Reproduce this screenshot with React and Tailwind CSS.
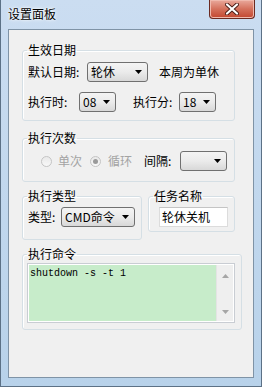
import React from "react";

const cjk = { fontFamily: '"Noto Sans CJK SC", "Noto Sans", sans-serif' };

const Arrow = ({ color = "#000" }) => (
  <svg width="7" height="4" viewBox="0 0 7 4" className="shrink-0">
    <path d="M0 0h7L3.5 4z" fill={color} />
  </svg>
);

const Select = ({ width, value }) => (
  <div
    className={`${width} h-[20px] flex items-center justify-between pl-[3px] pr-[5px] border border-[#707070] rounded-[3px] bg-gradient-to-b from-[#f4f4f4] via-[#ebebeb] to-[#d8d8d8] text-[12px] leading-[14px] text-black`}
  >
    <span className="whitespace-nowrap">{value}</span>
    <Arrow />
  </div>
);

const Radio = ({ checked }) => (
  <span className="w-[11px] h-[11px] rounded-full border border-[#c4c4c4] bg-gradient-to-b from-[#e9e9e9] to-[#f8f8f8] flex items-center justify-center shrink-0">
    {checked && <span className="w-[5px] h-[5px] rounded-full bg-[#9a9a9a]" />}
  </span>
);

const Group = ({ title, className = "", children }) => (
  <fieldset className={`border border-[#d5dfe5] rounded-[3px] shadow-[inset_1px_1px_0_#ffffff] ${className}`}>
    <legend className="ml-[4px] px-[1px] text-[12px] leading-[14px] text-black">{title}</legend>
    {children}
  </fieldset>
);

export default function App() {
  return (
    <div
      className="w-[262px] h-[387px] flex flex-col px-[7px] pb-[8px] bg-gradient-to-b from-[#cbddf1] to-[#b8d2ea] border-l border-r border-b border-[#5c7186] overflow-hidden"
      style={cjk}
    >
      <div className="h-[29px] flex items-start justify-between shrink-0">
        <span className="mt-[7px] text-[12px] leading-[14px] text-black [text-shadow:0_0_4px_#ffffff,0_0_2px_#ffffff]">
          设置面板
        </span>
        <div className="w-[46px] h-[19px] -mr-[1px] rounded-b-[4px] border border-t-0 border-[#6b2a21] bg-gradient-to-b from-[#e9a99c] via-[#d4705c] to-[#c2452e] flex items-center justify-center shadow-[inset_0_0_0_1px_#f0b9ad]">
          <svg width="14" height="12" viewBox="0 0 14 12">
            <path d="M2 1.5l10 9M12 1.5l-10 9" stroke="#4a1c16" strokeWidth="4" strokeLinecap="round" />
            <path d="M2 1.5l10 9M12 1.5l-10 9" stroke="#ffffff" strokeWidth="2.2" strokeLinecap="round" />
          </svg>
        </div>
      </div>

      <div className="flex-1 bg-[#f0f0f0] border border-[#7f93a6] flex flex-col pl-[13px]">
        <Group title="生效日期" className="mt-[13px] w-[213px]">
          <div className="pl-[5px] pt-[5px] pb-[8px] text-[12px] leading-[14px]">
            <div className="flex items-center">
              <span className="w-[59px] whitespace-nowrap">默认日期:</span>
              <Select width="w-[61px]" value="轮休" />
              <span className="ml-[11px] whitespace-nowrap">本周为单休</span>
            </div>
            <div className="flex items-center mt-[10px]">
              <span className="w-[51px] whitespace-nowrap">执行时:</span>
              <Select width="w-[37px]" value="08" />
              <span className="ml-[17px] w-[46px] whitespace-nowrap">执行分:</span>
              <Select width="w-[37px]" value="18" />
            </div>
          </div>
        </Group>

        <Group title="执行次数" className="mt-[10px] w-[213px]">
          <div className="pl-[18px] pt-[6px] pb-[10px] flex items-center text-[12px] leading-[14px]">
            <Radio />
            <span className="ml-[6px] text-[#a3a3a3]">单次</span>
            <span className="ml-[8px]">
              <Radio checked />
            </span>
            <span className="ml-[7px] text-[#a3a3a3]">循环</span>
            <span className="ml-[12px] w-[36px] whitespace-nowrap">间隔:</span>
            <Select width="w-[47px]" value="" />
          </div>
        </Group>

        <div className="flex items-start mt-[7px]">
          <Group title="执行类型" className="w-[120px]">
            <div className="pl-[5px] pt-[4px] pb-[12px] flex items-center text-[12px] leading-[14px]">
              <span className="w-[33px] whitespace-nowrap">类型:</span>
              <Select width="w-[74px]" value="CMD命令" />
            </div>
          </Group>
          <Group title="任务名称" className="ml-[6px] w-[87px]">
            <div className="pl-[10px] pt-[4px] pb-[4px]">
              <div className="w-[69px] h-[20px] bg-white border border-[#dcdcdc] border-t-[#c4c4c4] pl-[2px] flex items-center text-[12px] leading-[14px]">
                轮休关机
              </div>
            </div>
          </Group>
        </div>

        <Group title="执行命令" className="mt-[7px] w-[220px]">
          <div className="pl-[4px] pt-[2px] pb-[6px]">
            <div className="w-[208px] h-[60px] flex border border-[#c9cdd3] bg-white p-px">
              <div
                className="flex-1 bg-[#c7ecca] pl-[1px] pt-[3px] text-[10px] leading-[12px] text-black"
                style={{ fontFamily: '"Liberation Mono", monospace' }}
              >
                shutdown -s -t 1
              </div>
              <div className="w-[17px] bg-[#efefef] border-l border-[#e4e4e4] flex flex-col items-center justify-between pt-[9px] pb-[7px]">
                <svg width="7" height="4" viewBox="0 0 7 4">
                  <path d="M0 4h7L3.5 0z" fill="#a6a6a6" />
                </svg>
                <svg width="7" height="4" viewBox="0 0 7 4">
                  <path d="M0 0h7L3.5 4z" fill="#a6a6a6" />
                </svg>
              </div>
            </div>
          </div>
        </Group>
      </div>
    </div>
  );
}
